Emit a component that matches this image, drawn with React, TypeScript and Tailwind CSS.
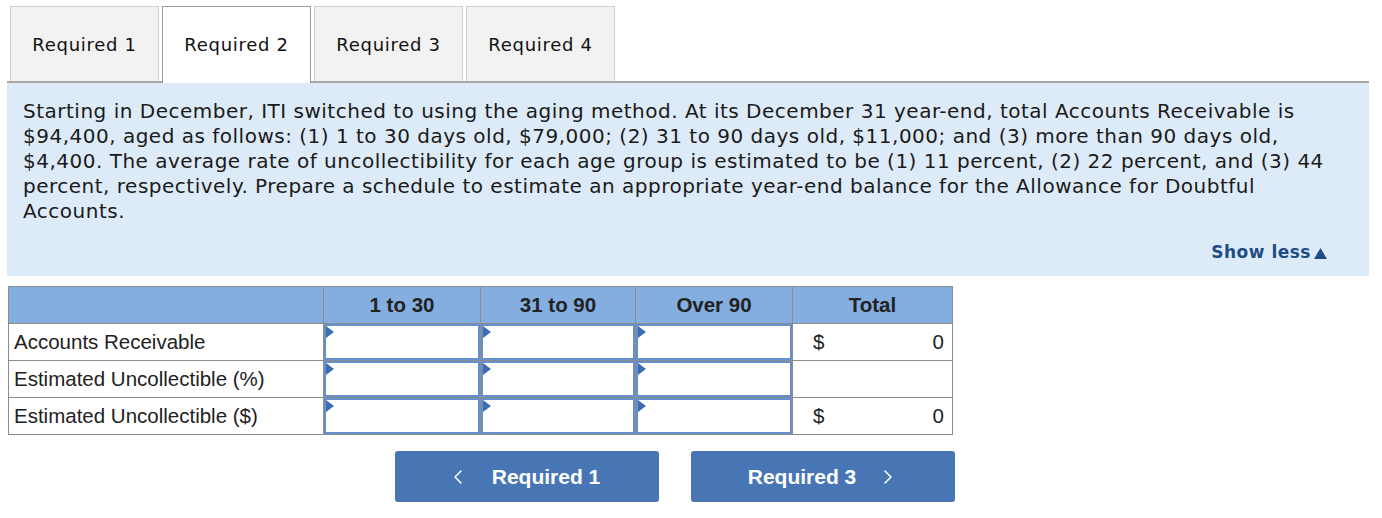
import { ChevronLeft, ChevronRight } from "lucide-react";

const tabs = ["Required 1", "Required 2", "Required 3", "Required 4"];

const lines = [
  "Starting in December, ITI switched to using the aging method. At its December 31 year-end, total Accounts Receivable is",
  "$94,400, aged as follows: (1) 1 to 30 days old, $79,000; (2) 31 to 90 days old, $11,000; and (3) more than 90 days old,",
  "$4,400. The average rate of uncollectibility for each age group is estimated to be (1) 11 percent, (2) 22 percent, and (3) 44",
  "percent, respectively. Prepare a schedule to estimate an appropriate year-end balance for the Allowance for Doubtful",
  "Accounts.",
];

const rows = [
  { label: "Accounts Receivable", total: "0" },
  { label: "Estimated Uncollectible (%)", total: null },
  { label: "Estimated Uncollectible ($)", total: "0" },
];

const InputCell = () => (
  <td className="border border-[#8c8c8c] p-0 h-[37px]">
    <div className="relative h-full w-full border-2 border-[#6590cb] bg-white">
      <span className="absolute left-0 top-0 h-0 w-0 border-y-[6px] border-l-[8px] border-y-transparent border-l-[#3d6db0]" />
    </div>
  </td>
);

export default function App() {
  return (
    <div className="min-h-[518px] bg-white pl-[7px] pt-[6px] w-[1369px]">
      {/* tabs */}
      <div className="flex gap-[3px] pl-[3px] border-b-2 border-[#a6a6a6] h-[77px] items-stretch">
        {tabs.map((t, i) => (
          <div
            key={t}
            className={`w-[149px] flex items-center justify-center text-[18px] tracking-[0.7px] text-[#111] font-['DejaVu_Sans',sans-serif] border ${
              i === 1
                ? "bg-white border-[#999] border-b-0 -mb-[2px] h-[77px] pb-[2px]"
                : "bg-[#f2f2f2] border-[#cfcfcf] border-b-0"
            }`}
          >
            <span className="mt-[1px]">{t}</span>
          </div>
        ))}
      </div>

      {/* question panel */}
      <div className="bg-[#ddebf8] h-[193px] px-4 pt-[16px] font-['DejaVu_Sans',sans-serif]">
        <p className="text-[20px] leading-[25px] tracking-[0.5px] text-[#1a1a1a] whitespace-nowrap">
          {lines.map((l) => (
            <span key={l} className="block">
              {l}
            </span>
          ))}
        </p>
        <div className="flex justify-end pr-[26px] mt-[16px]">
          <span className="flex items-center gap-[3px] text-[17px] tracking-[0.5px] font-bold text-[#1f4b86]">
            Show less
            <svg width="13" height="11" viewBox="0 0 13 11" className="mt-[1px]">
              <path d="M6.5 0 L13 11 L0 11 Z" fill="#1f4b86" />
            </svg>
          </span>
        </div>
      </div>

      {/* schedule table */}
      <table className="mt-[10px] ml-[1px] border-collapse font-['Liberation_Sans',Arial,sans-serif] text-[20.5px] text-[#222]">
        <thead>
          <tr className="bg-[#84ade0] h-[37px]">
            <th className="w-[315px] border border-[#8c8c8c]"></th>
            <th className="w-[157px] border border-[#8c8c8c] font-bold">1 to 30</th>
            <th className="w-[155px] border border-[#8c8c8c] font-bold">31 to 90</th>
            <th className="w-[157px] border border-[#8c8c8c] font-bold">Over 90</th>
            <th className="w-[160px] border border-[#8c8c8c] font-bold">Total</th>
          </tr>
        </thead>
        <tbody>
          {rows.map((r) => (
            <tr key={r.label} className="h-[37px]">
              <td className="border border-[#8c8c8c] pl-[5px] text-left">{r.label}</td>
              <InputCell />
              <InputCell />
              <InputCell />
              <td className="border border-[#8c8c8c] px-[8px]">
                {r.total !== null && (
                  <div className="flex justify-between pl-[12px]">
                    <span>$</span>
                    <span>{r.total}</span>
                  </div>
                )}
              </td>
            </tr>
          ))}
        </tbody>
      </table>

      {/* navigation */}
      <div className="flex gap-[32px] pl-[388px] mt-[16px] font-['Liberation_Sans',Arial,sans-serif]">
        <button className="w-[264px] h-[51px] bg-[#4876b5] rounded-[3px] text-white text-[21px] font-bold flex items-center justify-center gap-[22px]">
          <ChevronLeft size={24} strokeWidth={1.5} className="-ml-[8px]" />
          <span>Required 1</span>
        </button>
        <button className="w-[264px] h-[51px] bg-[#4876b5] rounded-[3px] text-white text-[21px] font-bold flex items-center justify-center gap-[20px]">
          <span className="ml-[2px]">Required 3</span>
          <ChevronRight size={24} strokeWidth={1.5} />
        </button>
      </div>
    </div>
  );
}
